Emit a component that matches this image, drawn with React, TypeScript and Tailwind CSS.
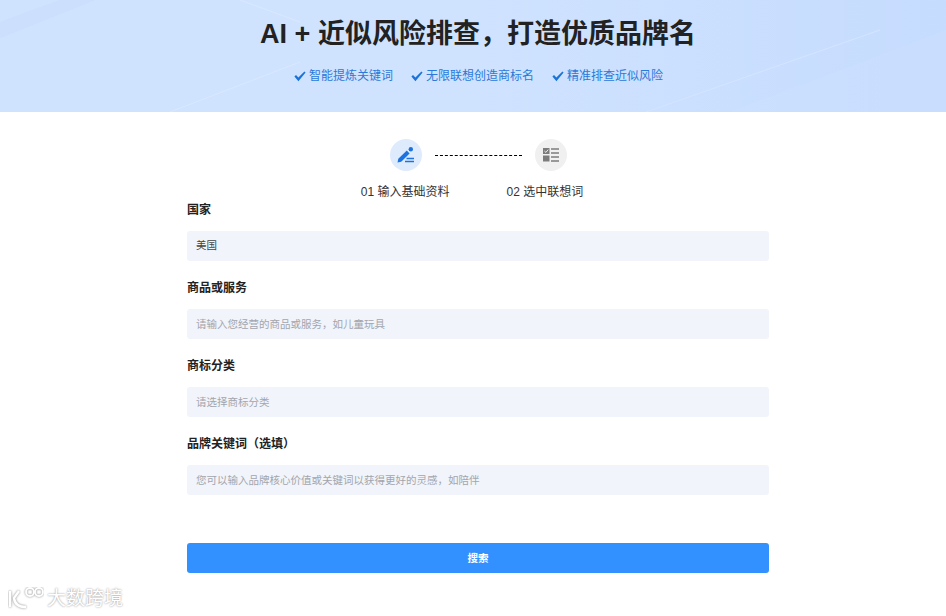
import React from "react";

const font = { fontFamily: '"Liberation Sans", "Noto Sans CJK SC", sans-serif' };

function Check() {
  return (
    <svg width="12" height="11" viewBox="0 0 12 11" className="shrink-0">
      <path d="M0.4 5.6 L2 4 L4.4 6.4 L10.4 0.4 L11.6 1.6 L4.4 10.2 Z" fill="#1a73d9" />
    </svg>
  );
}

function Feature({ text }: { text: string }) {
  return (
    <div className="flex items-center gap-[3px] text-[12px] leading-[16px] text-[#2b79d8]">
      <Check />
      <span>{text}</span>
    </div>
  );
}

function Field({ label, text, dark }: { label: string; text: string; dark?: boolean }) {
  return (
    <div className="flex flex-col">
      <div className="h-[20px] text-[12px] leading-[20px] font-bold text-[#222]">{label}</div>
      <div
        className={`mt-[11px] flex h-[30px] items-center rounded-[3px] bg-[#f1f4fa] px-[9px] text-[10.5px] ${
          dark ? "text-[#444]" : "pt-[2px] text-[#a3a5ad]"
        }`}
      >
        {text}
      </div>
    </div>
  );
}

export default function App() {
  return (
    <div className="relative h-[616px] w-[946px] overflow-hidden bg-white" style={font}>
      <header className="relative flex h-[112px] flex-col items-center overflow-hidden bg-gradient-to-r from-[#cfe2fe] via-[#cfe3ff] to-[#c6dcfe] pl-[10px]">
        <svg className="absolute inset-0" width="946" height="112" viewBox="0 0 946 112">
          <path d="M0 38 L95 0 L60 0 L0 22 Z" fill="#c9dcfc" opacity="0.5" />
          <path d="M170 112 L300 62" stroke="#d9e8ff" strokeWidth="1" />
          <path d="M240 0 L300 22" stroke="#d9e8ff" strokeWidth="1" />
          <path d="M646 112 L880 30" stroke="#d4e4ff" strokeWidth="1" />
          <path d="M730 112 L946 30 L946 112 Z" fill="#cde0ff" opacity="0.4" />
        </svg>
        <h1 className="relative mt-[15px] text-[27px] leading-[38px] font-bold text-[#222]">
          AI + 近似风险排查，打造优质品牌名
        </h1>
        <div className="relative mt-[15px] flex gap-[18px] pl-[1px]">
          <Feature text="智能提炼关键词" />
          <Feature text="无限联想创造商标名" />
          <Feature text="精准排查近似风险" />
        </div>
      </header>

      <main className="flex flex-col items-center pl-[10px]">
        <div className="mt-[27px] flex items-center">
          <div className="flex h-[32px] w-[32px] items-center justify-center rounded-full bg-[#deebfd]">
            <svg width="18" height="18" viewBox="0 0 18 18">
              <path d="M0.5 16.5 L1.3 12.8 L9.8 4.5 L12.6 7.4 L4.2 15.7 Z" fill="#1a73e0" />
              <circle cx="13.8" cy="3.2" r="2.2" fill="#1a73e0" />
              <path d="M9.5 12.6 H17 M8 15.4 H17" stroke="#1a73e0" strokeWidth="1.5" />
            </svg>
          </div>
          <div className="mx-[13px] w-[87px] border-t border-dashed border-black" />
          <div className="flex h-[32px] w-[32px] items-center justify-center rounded-full bg-[#f0f0f0]">
            <svg width="16" height="14" viewBox="0 0 16 14">
              <rect x="0" y="0" width="6.5" height="6" fill="#7c7c7c" />
              <path d="M1.4 3 L2.9 4.4 L5.2 1.6" fill="none" stroke="#f0f0f0" strokeWidth="1" />
              <rect x="0" y="7.5" width="6.5" height="6" fill="#7c7c7c" />
              <path d="M8 1 H16 M8 5 H16 M8 9 H16 M8 13 H16" stroke="#7c7c7c" strokeWidth="1.4" />
            </svg>
          </div>
        </div>
        <div className="mt-[13px] flex gap-[57px] pr-[12px] text-[12px] leading-[16px] text-[#333]">
          <span>01 输入基础资料</span>
          <span>02 选中联想词</span>
        </div>

        <div className="flex w-[582px] flex-col gap-[17px]">
          <Field label="国家" text="美国" dark />
          <Field label="商品或服务" text="请输入您经营的商品或服务，如儿童玩具" />
          <Field label="商标分类" text="请选择商标分类" />
          <Field label="品牌关键词（选填）" text="您可以输入品牌核心价值或关键词以获得更好的灵感，如陪伴" />
        </div>

        <button className="mt-[48px] h-[30px] w-[582px] rounded-[3px] bg-[#3291ff] pt-[2px] text-[10.5px] font-bold text-white">
          搜索
        </button>
      </main>

      <div className="absolute bottom-[5px] left-[8px] flex items-center gap-[3px] text-[19px] leading-[24px] text-white [text-shadow:0_0_2px_#888]">
        <svg width="36" height="24" viewBox="0 0 36 24">
          <g fill="none" stroke="#ffffff" strokeWidth="2.4" style={{ filter: "drop-shadow(0 0 1px #888)" }}>
            <path d="M2 4 V20" />
            <path d="M11 4 L6 11 Q7 20 18 20" />
            <circle cx="22" cy="5" r="4" strokeWidth="1.8" />
            <circle cx="31" cy="5" r="4" strokeWidth="1.8" />
          </g>
        </svg>
        <span>大数跨境</span>
      </div>
    </div>
  );
}
